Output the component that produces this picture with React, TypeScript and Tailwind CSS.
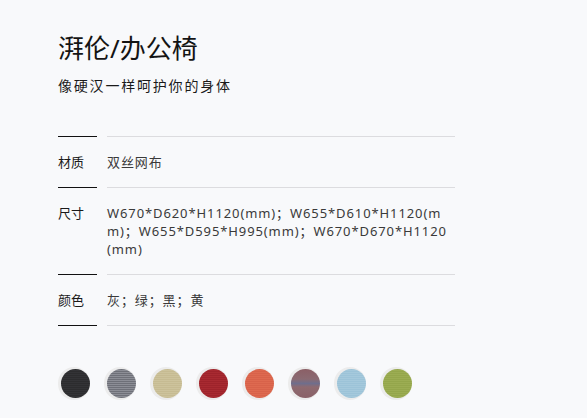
import React from "react";

const rows: { label: string; value: string }[] = [
  { label: "材质", value: "双丝网布" },
  {
    label: "尺寸",
    value:
      "W670*D620*H1120(mm)；W655*D610*H1120(mm)；W655*D595*H995(mm)；W670*D670*H1120(mm)",
  },
  { label: "颜色", value: "灰；绿；黑；黄" },
];

const swatches = [
  "bg-[repeating-linear-gradient(0deg,#2c2c2e_0px,#2c2c2e_1px,#333336_1px,#333336_2px)]",
  "bg-[repeating-linear-gradient(0deg,#6e7078_0px,#6e7078_1px,#8c8e96_1px,#8c8e96_2px)]",
  "bg-[repeating-linear-gradient(0deg,#c6bb92_0px,#c6bb92_1px,#cdc39c_1px,#cdc39c_2px)]",
  "bg-[repeating-linear-gradient(0deg,#9e232b_0px,#9e232b_1px,#a82a31_1px,#a82a31_2px)]",
  "bg-[repeating-linear-gradient(0deg,#d8624a_0px,#d8624a_1px,#de6a50_1px,#de6a50_2px)]",
  "bg-[linear-gradient(180deg,#8b5f66_0%,#8a6a72_35%,#6f6e8c_50%,#8e6a70_62%,#8a6168_100%)]",
  "bg-[repeating-linear-gradient(0deg,#9cc3d8_0px,#9cc3d8_1px,#a5c9dc_1px,#a5c9dc_2px)]",
  "bg-[repeating-linear-gradient(0deg,#94a64b_0px,#94a64b_1px,#9cad53_1px,#9cad53_2px)]",
];

export default function App() {
  return (
    <div className="min-h-[418px] w-full bg-[#f8f9fb] pl-[58px] pt-[33px] font-['Noto_Sans','Noto_Sans_CJK_SC',sans-serif]">
      <h1 className="text-[26px] leading-[30px] text-[#141414] font-normal">湃伦/办公椅</h1>
      <p className="mt-[13px] text-[14px] leading-[20px] tracking-[1.8px] text-[#1a1a1a]">
        像硬汉一样呵护你的身体
      </p>
      <div className="mt-[40px] w-[397px]">
        {rows.map((r) => (
          <div key={r.label} className="flex gap-[10px]">
            <div className="w-[39px] shrink-0 border-t border-[#111] py-4 text-[13px] leading-[18px] text-[#1a1a1a]">
              {r.label}
            </div>
            <div className="flex-1 border-t border-[#dcdcdf] py-4 text-[13px] leading-[18px] tracking-[0.9px] text-[#3a3a3a] break-all">
              {r.value}
            </div>
          </div>
        ))}
        <div className="flex gap-[10px]">
          <div className="w-[39px] shrink-0 border-t border-[#111]" />
          <div className="flex-1 border-t border-[#dcdcdf]" />
        </div>
      </div>
      <div className="mt-[41px] flex gap-[14px]">
        {swatches.map((s, i) => (
          <div key={i} className="h-[33px] w-[32px] rounded-full bg-[#ececec] pl-[3px] pt-[2px]">
            <div className={`h-[29px] w-[29px] rounded-full ${s}`} />
          </div>
        ))}
      </div>
    </div>
  );
}
